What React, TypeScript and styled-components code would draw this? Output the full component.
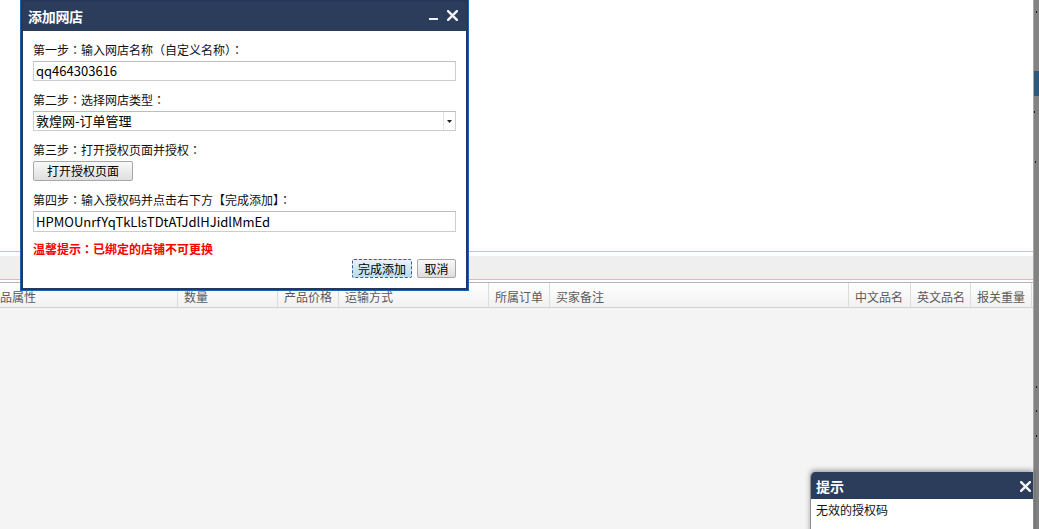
import React from "react";
import styled, { createGlobalStyle } from "styled-components";

const GlobalStyle = createGlobalStyle`
  html, body { margin: 0; padding: 0; width: 100%; height: 100%; overflow: hidden; background: #fff; }
  body { font-family: "Noto Sans CJK SC", "Noto Sans", sans-serif; font-size: 12px; color: #000; }
  * { box-sizing: border-box; }
`;

const Page = styled.div`
  position: relative;
  display: flex;
  width: 1039px;
  height: 529px;
  overflow: hidden;
`;

const Main = styled.div`
  flex: 1;
  min-width: 0;
  display: flex;
  flex-direction: column;
`;

const TopArea = styled.div`
  height: 252px;
  background: #fff;
  border-bottom: 1px solid #e9c46c;
`;

const WhiteGap = styled.div<{ $h: number }>`
  height: ${(p) => p.$h}px;
  background: #fff;
`;

const Toolbar = styled.div`
  height: 24px;
  background: #efefef;
  border-bottom: 1px solid #e9c46c;
`;

const HeaderRow = styled.div`
  display: flex;
  height: 26px;
  border-top: 1px solid #b4b4b4;
  border-bottom: 1px solid #d2d2d2;
  background: linear-gradient(#ffffff, #f1f1f1);
  overflow: hidden;
`;

const HeadCell = styled.div<{ $w: number; $first?: boolean }>`
  flex: 0 0 ${(p) => p.$w}px;
  padding: 4px 0 0 6px;
  margin-left: ${(p) => (p.$first ? -18 : 0)}px;
  border-right: 1px solid #dcdcdc;
  color: #5a5a5a;
  font-size: 12px;
  line-height: 20px;
  white-space: nowrap;
`;

const Body = styled.div`
  flex: 1;
  background: #f4f4f4;
`;

const Strip = styled.div`
  position: relative;
  flex: 0 0 6px;
  background: #838383;
  border-left: 1px solid #a8a8a8;
`;

const StripThumb = styled.div`
  margin-top: 71px;
  height: 25px;
  background: #2b5a7c;
`;

const Dot = styled.span<{ $t: number; $l: number }>`
  position: absolute;
  top: ${(p) => p.$t}px;
  left: ${(p) => p.$l}px;
  width: 1px;
  height: 2px;
  background: #1a1030;
`;

/* ---------- dialog ---------- */

const Dialog = styled.div`
  position: absolute;
  left: 21px;
  top: 0;
  width: 447px;
  height: 290px;
  background: #fff;
  border: 2px solid #26375a;
  box-shadow: 0 0 0 1px #1a63b6;
  display: flex;
  flex-direction: column;
`;

const TitleBar = styled.div`
  height: 29px;
  background: #2c3d5c;
  display: flex;
  align-items: center;
  padding: 0 8px 2px 5px;
  color: #fff;
`;

const Title = styled.div`
  flex: 1;
  font-size: 14px;
  font-weight: bold;
  letter-spacing: -0.3px;
`;

const TitleIcons = styled.div`
  display: flex;
  align-items: center;
  gap: 9px;
`;

const Content = styled.div`
  padding: 11px 10px 10px 10px;
  display: flex;
  flex-direction: column;
`;

const Field = styled.div`
  display: flex;
  flex-direction: column;
  margin-bottom: 11px;
`;

const Label = styled.div`
  height: 16px;
  line-height: 16px;
  margin-bottom: 3px;
  font-size: 12px;
  color: #111;
  white-space: nowrap;
`;

const Punct = styled.span`
  font-family: "Noto Sans CJK TC", "Noto Sans CJK SC", sans-serif;
`;

const TextBox = styled.div<{ $h?: number }>`
  height: ${(p) => p.$h ?? 20}px;
  border: 1px solid #cdcdcd;
  border-top-color: #bdbdbd;
  background: #fff;
  padding-left: 2px;
  font-size: 13px;
  line-height: ${(p) => (p.$h ?? 20) - 2}px;
  color: #000;
  white-space: nowrap;
`;

const SelectBox = styled.div`
  height: 20px;
  border: 1px solid #cdcdcd;
  border-top-color: #bdbdbd;
  display: flex;
  align-items: stretch;
`;

const SelectText = styled.div`
  flex: 1;
  padding-left: 2px;
  font-size: 13px;
  line-height: 18px;
`;

const SelectArrow = styled.div`
  flex: 0 0 12px;
  border-left: 1px solid #e2e2e2;
  display: flex;
  align-items: center;
  justify-content: center;
`;

const Button = styled.button<{ $w: number; $h?: number; $primary?: boolean }>`
  width: ${(p) => p.$w}px;
  height: ${(p) => p.$h ?? 19}px;
  padding: 0;
  font-family: inherit;
  font-size: 12px;
  line-height: 1;
  color: #000;
  border-radius: 2px;
  border: 1px ${(p) => (p.$primary ? "dashed #37627e" : "solid #a7a7a7")};
  background: ${(p) =>
    p.$primary
      ? "linear-gradient(#e8f4fb, #cde7f6 50%, #b9dcf1)"
      : "linear-gradient(#f8f8f8, #ececec 50%, #dedede)"};
`;

const Warning = styled.div`
  margin-top: -2px;
  height: 16px;
  line-height: 16px;
  color: #ff0000;
  font-weight: bold;
  font-size: 12px;
`;

const Actions = styled.div`
  margin-top: 2px;
  display: flex;
  justify-content: flex-end;
  gap: 5px;
`;

/* ---------- toast ---------- */

const Toast = styled.div`
  position: absolute;
  left: 810px;
  top: 472px;
  width: 223px;
  height: 70px;
  background: #fff;
  border-left: 1px solid #8e8e8e;
  border-radius: 5px 0 0 0;
  box-shadow: 0 -2px 5px rgba(0, 0, 0, 0.35);
  overflow: hidden;
`;

const ToastHead = styled.div`
  height: 27px;
  background: #2c3d5c;
  display: flex;
  align-items: center;
  padding: 1px 2px 0 5px;
  color: #fff;
`;

const ToastTitle = styled.div`
  flex: 1;
  font-size: 14px;
  font-weight: bold;
`;

const ToastBody = styled.div`
  padding: 3px 5px;
  font-size: 12px;
  line-height: 16px;
  color: #111;
`;

const CloseIcon = ({ size = 10 }: { size?: number }) => (
  <svg width={size} height={size} viewBox="0 0 10 10">
    <path d="M1 1 L9 9 M9 1 L1 9" stroke="#f2f2f2" strokeWidth="2.2" strokeLinecap="square" />
  </svg>
);

const MinIcon = () => (
  <svg width="9" height="10" viewBox="0 0 9 10">
    <rect x="0" y="7" width="9" height="2" fill="#f2f2f2" />
  </svg>
);

const ArrowIcon = () => (
  <svg width="5" height="3" viewBox="0 0 5 3">
    <path d="M0 0 H5 L2.5 3 Z" fill="#222" />
  </svg>
);

/* wrap fullwidth punctuation so it renders centred, as in the reference */
const Text = ({ children }: { children: string }) => (
  <>
    {children.split(/([：（）])/).map((part, i) =>
      /^[：（）]$/.test(part) ? <Punct key={i}>{part}</Punct> : <React.Fragment key={i}>{part}</React.Fragment>
    )}
  </>
);

const columns: { w: number; t: string }[] = [
  { w: 196, t: "产品属性" },
  { w: 100, t: "数量" },
  { w: 61, t: "产品价格" },
  { w: 150, t: "运输方式" },
  { w: 61, t: "所属订单" },
  { w: 299, t: "买家备注" },
  { w: 62, t: "中文品名" },
  { w: 60, t: "英文品名" },
  { w: 61, t: "报关重量" },
];

export default function App() {
  return (
    <>
      <GlobalStyle />
      <Page>
        <Main>
          <TopArea />
          <WhiteGap $h={4} />
          <Toolbar />
          <WhiteGap $h={2} />
          <HeaderRow>
            {columns.map((c, i) => (
              <HeadCell key={c.t} $w={c.w} $first={i === 0}>
                {c.t}
              </HeadCell>
            ))}
          </HeaderRow>
          <Body />
        </Main>
        <Strip>
          <StripThumb />
          <Dot $t={11} $l={2} />
          <Dot $t={111} $l={0} />
          <Dot $t={161} $l={1} />
          <Dot $t={386} $l={2} />
          <Dot $t={410} $l={2} />
          <Dot $t={435} $l={2} />
        </Strip>

        <Dialog>
          <TitleBar>
            <Title>添加网店</Title>
            <TitleIcons>
              <MinIcon />
              <CloseIcon size={11} />
            </TitleIcons>
          </TitleBar>
          <Content>
            <Field>
              <Label><Text>第一步：输入网店名称（自定义名称）：</Text></Label>
              <TextBox>qq464303616</TextBox>
            </Field>
            <Field>
              <Label><Text>第二步：选择网店类型：</Text></Label>
              <SelectBox>
                <SelectText>敦煌网-订单管理</SelectText>
                <SelectArrow>
                  <ArrowIcon />
                </SelectArrow>
              </SelectBox>
            </Field>
            <Field>
              <Label><Text>第三步：打开授权页面并授权：</Text></Label>
              <Button $w={100} $h={20}>打开授权页面</Button>
            </Field>
            <Field>
              <Label><Text>第四步：输入授权码并点击右下方【完成添加】：</Text></Label>
              <TextBox $h={21}>HPMOUnrfYqTkLlsTDtATJdlHJidlMmEd</TextBox>
            </Field>
            <Warning><Text>温馨提示：已绑定的店铺不可更换</Text></Warning>
            <Actions>
              <Button $w={60} $primary>完成添加</Button>
              <Button $w={39}>取消</Button>
            </Actions>
          </Content>
        </Dialog>

        <Toast>
          <ToastHead>
            <ToastTitle>提示</ToastTitle>
            <CloseIcon size={11} />
          </ToastHead>
          <ToastBody>无效的授权码</ToastBody>
        </Toast>
      </Page>
    </>
  );
}
